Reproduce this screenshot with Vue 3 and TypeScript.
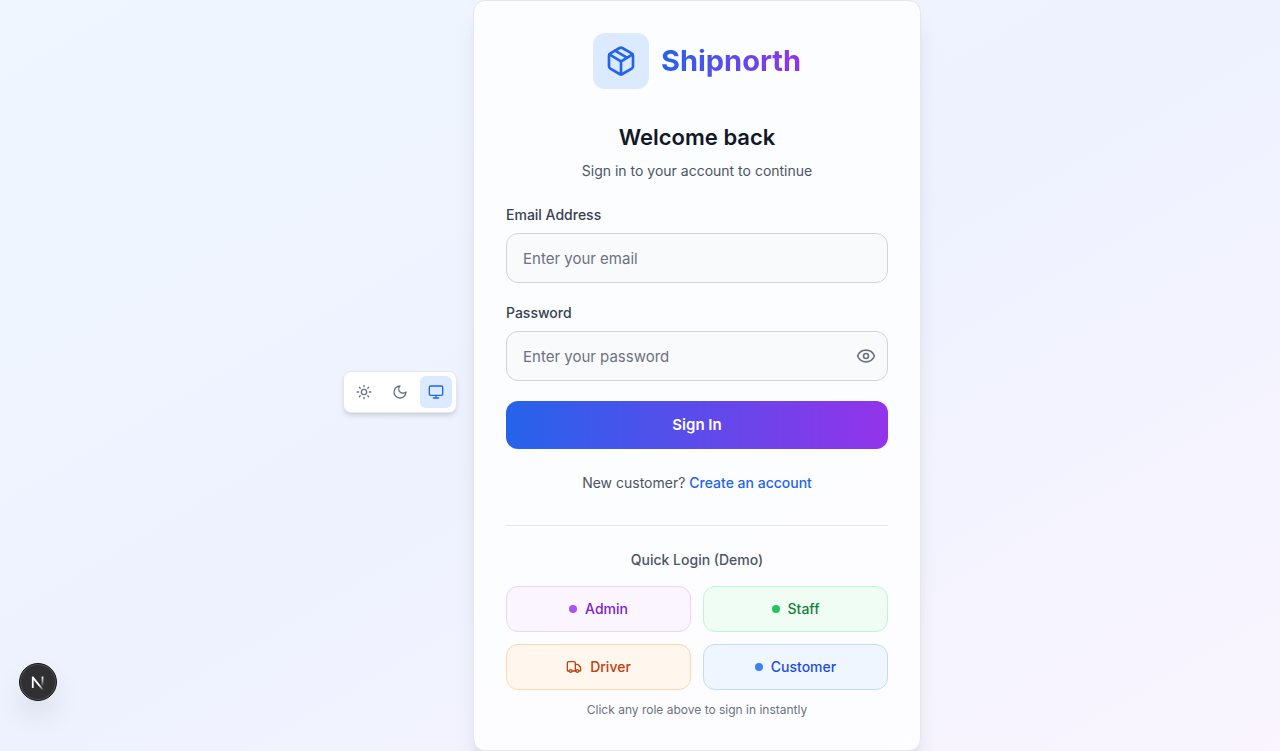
<script setup lang="ts">
import { ref } from 'vue'

type Theme = 'light' | 'dark' | 'system'

interface Role {
  id: string
  label: string
}

const themes: Theme[] = ['light', 'dark', 'system']
const theme = ref<Theme>('system')
const email = ref('')
const password = ref('')
const showPassword = ref(false)

const roles: Role[] = [
  { id: 'admin', label: 'Admin' },
  { id: 'staff', label: 'Staff' },
  { id: 'driver', label: 'Driver' },
  { id: 'customer', label: 'Customer' },
]

function quickLogin(role: Role) {
  email.value = `${role.id}@shipnorth.com`
}
</script>

<template>
  <div class="page">
    <div class="themes" role="group" aria-label="Theme">
      <button
        v-for="name in themes"
        :key="name"
        type="button"
        class="theme"
        :class="{ active: theme === name }"
        :aria-label="name"
        :aria-pressed="theme === name"
        @click="theme = name"
      >
        <svg class="icon small" viewBox="0 0 24 24" aria-hidden="true">
          <template v-if="name === 'light'">
            <circle cx="12" cy="12" r="4" />
            <path d="M12 2v2M12 20v2M4.93 4.93l1.41 1.41M17.66 17.66l1.41 1.41M2 12h2M20 12h2M6.34 17.66l-1.41 1.41M19.07 4.93l-1.41 1.41" />
          </template>
          <path v-else-if="name === 'dark'" d="M12 3a6 6 0 0 0 9 9 9 9 0 1 1-9-9Z" />
          <template v-else>
            <rect width="20" height="14" x="2" y="3" rx="2" />
            <path d="M8 21h8M12 17v4" />
          </template>
        </svg>
      </button>
    </div>

    <main class="column">
      <section class="card">
        <div class="brand">
          <span class="logo">
            <svg class="icon large" viewBox="0 0 24 24" aria-hidden="true">
              <path d="M11 21.73a2 2 0 0 0 2 0l7-4A2 2 0 0 0 21 16V8a2 2 0 0 0-1-1.73l-7-4a2 2 0 0 0-2 0l-7 4A2 2 0 0 0 3 8v8a2 2 0 0 0 1 1.73z" />
              <path d="M12 22V12" />
              <path d="m3.3 7 7.703 4.734a2 2 0 0 0 1.994 0L20.7 7" />
              <path d="m7.5 4.27 9 5.15" />
            </svg>
          </span>
          <span class="brand-name">Shipnorth</span>
        </div>

        <h1>Welcome back</h1>
        <p class="subtitle">Sign in to your account to continue</p>

        <form @submit.prevent>
          <div class="field">
            <label for="email">Email Address</label>
            <input id="email" v-model="email" type="email" placeholder="Enter your email" />
          </div>
          <div class="field">
            <label for="password">Password</label>
            <div class="password">
              <input
                id="password"
                v-model="password"
                :type="showPassword ? 'text' : 'password'"
                placeholder="Enter your password"
              />
              <button type="button" class="reveal" aria-label="Show password" @click="showPassword = !showPassword">
                <svg class="icon medium" viewBox="0 0 24 24" aria-hidden="true">
                  <path d="M2.062 12.348a1 1 0 0 1 0-.696 10.75 10.75 0 0 1 19.876 0 1 1 0 0 1 0 .696 10.75 10.75 0 0 1-19.876 0" />
                  <circle cx="12" cy="12" r="3" />
                </svg>
              </button>
            </div>
          </div>
          <button type="submit" class="submit">Sign In</button>
        </form>

        <p class="signup">New customer? <a href="#register">Create an account</a></p>

        <div class="quick">
          <h2>Quick Login (Demo)</h2>
          <div class="roles">
            <button v-for="role in roles" :key="role.id" type="button" class="role" :class="role.id" @click="quickLogin(role)">
              <svg v-if="role.id === 'driver'" class="icon small" viewBox="0 0 24 24" aria-hidden="true">
                <path d="M14 18V6a2 2 0 0 0-2-2H4a2 2 0 0 0-2 2v11a1 1 0 0 0 1 1h2" />
                <path d="M15 18H9" />
                <path d="M19 18h2a1 1 0 0 0 1-1v-3.65a1 1 0 0 0-.22-.624l-3.48-4.35A1 1 0 0 0 17.52 8H14" />
                <circle cx="17" cy="18" r="2" />
                <circle cx="7" cy="18" r="2" />
              </svg>
              <span v-else class="dot"></span>
              <span>{{ role.label }}</span>
            </button>
          </div>
          <p class="hint">Click any role above to sign in instantly</p>
        </div>
      </section>
    </main>

    <button type="button" class="devtools" aria-label="Open developer tools">
      <svg viewBox="0 0 40 40" aria-hidden="true">
        <defs>
          <linearGradient id="diagonal" x1="18" y1="20" x2="26" y2="29" gradientUnits="userSpaceOnUse">
            <stop offset="0.4" stop-color="#fff" />
            <stop offset="1" stop-color="#fff" stop-opacity="0" />
          </linearGradient>
          <linearGradient id="stem" x1="25" y1="14" x2="25" y2="25" gradientUnits="userSpaceOnUse">
            <stop stop-color="#fff" />
            <stop offset="1" stop-color="#fff" stop-opacity="0" />
          </linearGradient>
        </defs>
        <path d="M14.2 14.8L25.4 28.6" fill="none" stroke="url(#diagonal)" stroke-width="2" />
        <path d="M14.2 26.6V14" fill="none" stroke="#fff" stroke-width="2" />
        <path d="M25 14V25" fill="none" stroke="url(#stem)" stroke-width="2" />
      </svg>
    </button>
  </div>
</template>

<style>
body {
  margin: 0;
}
</style>

<style scoped>
.page {
  box-sizing: border-box;
  min-height: 100vh;
  display: flex;
  align-items: center;
  justify-content: center;
  background: linear-gradient(to bottom right, #eff6ff, #eef2ff, #faf5ff);
  color: #111827;
  font-family: Inter, "Liberation Sans", sans-serif;
  font-size: 14px;
  line-height: 20px;
}

.page *,
.page *::before {
  box-sizing: border-box;
}

h1,
h2,
p {
  margin: 0;
}

button,
input {
  font: inherit;
}

button {
  cursor: pointer;
}

.icon {
  flex: none;
  fill: none;
  stroke: currentColor;
  stroke-width: 2;
  stroke-linecap: round;
  stroke-linejoin: round;
}

.small {
  width: 16px;
  height: 16px;
}

.medium {
  width: 20px;
  height: 20px;
}

.large {
  width: 32px;
  height: 32px;
}

.themes {
  display: flex;
  gap: 4px;
  margin-top: 32px;
  padding: 4px;
  border: 1px solid #e5e7eb;
  border-radius: 8px;
  background: #fff;
  box-shadow: 0 4px 6px -1px rgb(0 0 0 / 0.1), 0 2px 4px -2px rgb(0 0 0 / 0.1);
}

.theme {
  display: grid;
  place-items: center;
  width: 32px;
  height: 32px;
  padding: 0;
  border: 0;
  border-radius: 6px;
  background: transparent;
  color: #6b7280;
}

.theme.active {
  background: #dbeafe;
  color: #2563eb;
}

.column {
  width: 100%;
  max-width: 480px;
  padding: 0 16px;
  box-sizing: border-box;
}

.card {
  padding: 32px;
  border: 1px solid #e5e7eb;
  border-radius: 12px;
  background: rgb(255 255 255 / 0.8);
  background-clip: padding-box;
  box-shadow: 0 20px 25px -5px rgb(0 0 0 / 0.1), 0 8px 10px -6px rgb(0 0 0 / 0.1);
  text-align: center;
}

.brand {
  display: flex;
  align-items: center;
  justify-content: center;
  gap: 12px;
  margin-bottom: 32px;
}

.logo {
  display: grid;
  place-items: center;
  width: 56px;
  height: 56px;
  border-radius: 12px;
  background: #dbeafe;
  color: #2563eb;
}

.brand-name {
  background: linear-gradient(to right, #2563eb, #9333ea);
  background-clip: text;
  color: transparent;
  font-size: 29px;
  font-weight: 700;
  line-height: 36px;
}

h1 {
  margin-bottom: 8px;
  font-size: 22px;
  font-weight: 600;
  line-height: 32px;
}

.subtitle {
  margin-bottom: 24px;
  color: #4b5563;
}

form {
  display: flex;
  flex-direction: column;
  gap: 20px;
}

.field {
  display: flex;
  flex-direction: column;
  gap: 8px;
  text-align: left;
}

label {
  color: #374151;
  font-weight: 500;
}

input {
  width: 100%;
  height: 50px;
  padding: 12px 16px;
  border: 1px solid #d1d5db;
  border-radius: 12px;
  outline: none;
  background: #f9fafb;
  color: #111827;
  font-size: 15px;
  line-height: 24px;
}

input::placeholder {
  color: #6b7280;
  opacity: 1;
}

.password {
  display: grid;
  align-items: center;
}

.password > * {
  grid-area: 1 / 1;
}

.password input {
  padding-right: 48px;
}

.reveal {
  display: grid;
  justify-self: end;
  margin-right: 12px;
  padding: 0;
  border: 0;
  background: transparent;
  color: #6b7280;
}

.submit {
  height: 48px;
  border: 0;
  border-radius: 12px;
  background: linear-gradient(to right, #2563eb, #9333ea);
  color: #fff;
  font-size: 15px;
  font-weight: 600;
  line-height: 24px;
}

.signup {
  margin-top: 24px;
  color: #4b5563;
}

.signup a {
  color: #2563eb;
  font-weight: 500;
  text-decoration: none;
}

.quick {
  margin-top: 32px;
  padding-top: 24px;
  border-top: 1px solid #e5e7eb;
}

h2 {
  margin-bottom: 16px;
  color: #4b5563;
  font-size: 14px;
  font-weight: 500;
  line-height: 20px;
}

.roles {
  display: grid;
  grid-template-columns: repeat(2, 1fr);
  gap: 12px;
}

.role {
  display: flex;
  align-items: center;
  justify-content: center;
  gap: 8px;
  height: 46px;
  padding: 12px 16px;
  border: 1px solid;
  border-radius: 12px;
  font-weight: 500;
}

.dot {
  width: 8px;
  height: 8px;
  border-radius: 50%;
}

.admin {
  border-color: #e9d5ff;
  background: #faf5ff;
  color: #7e22ce;
}

.admin .dot {
  background: #a855f7;
}

.staff {
  border-color: #bbf7d0;
  background: #f0fdf4;
  color: #15803d;
}

.staff .dot {
  background: #22c55e;
}

.driver {
  border-color: #fed7aa;
  background: #fff7ed;
  color: #c2410c;
}

.customer {
  border-color: #bfdbfe;
  background: #eff6ff;
  color: #1d4ed8;
}

.customer .dot {
  background: #3b82f6;
}

.hint {
  margin-top: 12px;
  color: #6b7280;
  font-size: 12px;
  line-height: 16px;
}

.devtools {
  position: fixed;
  bottom: 50px;
  left: 19px;
  width: 38px;
  height: 38px;
  padding: 0;
  border: 1px solid #171717;
  border-radius: 50%;
  background: #303032;
  box-shadow: inset 0 0 0 1px #505052, 0 16px 32px -8px rgb(0 0 0 / 0.24);
}

.devtools svg {
  display: block;
  width: 100%;
  height: 100%;
}
</style>
